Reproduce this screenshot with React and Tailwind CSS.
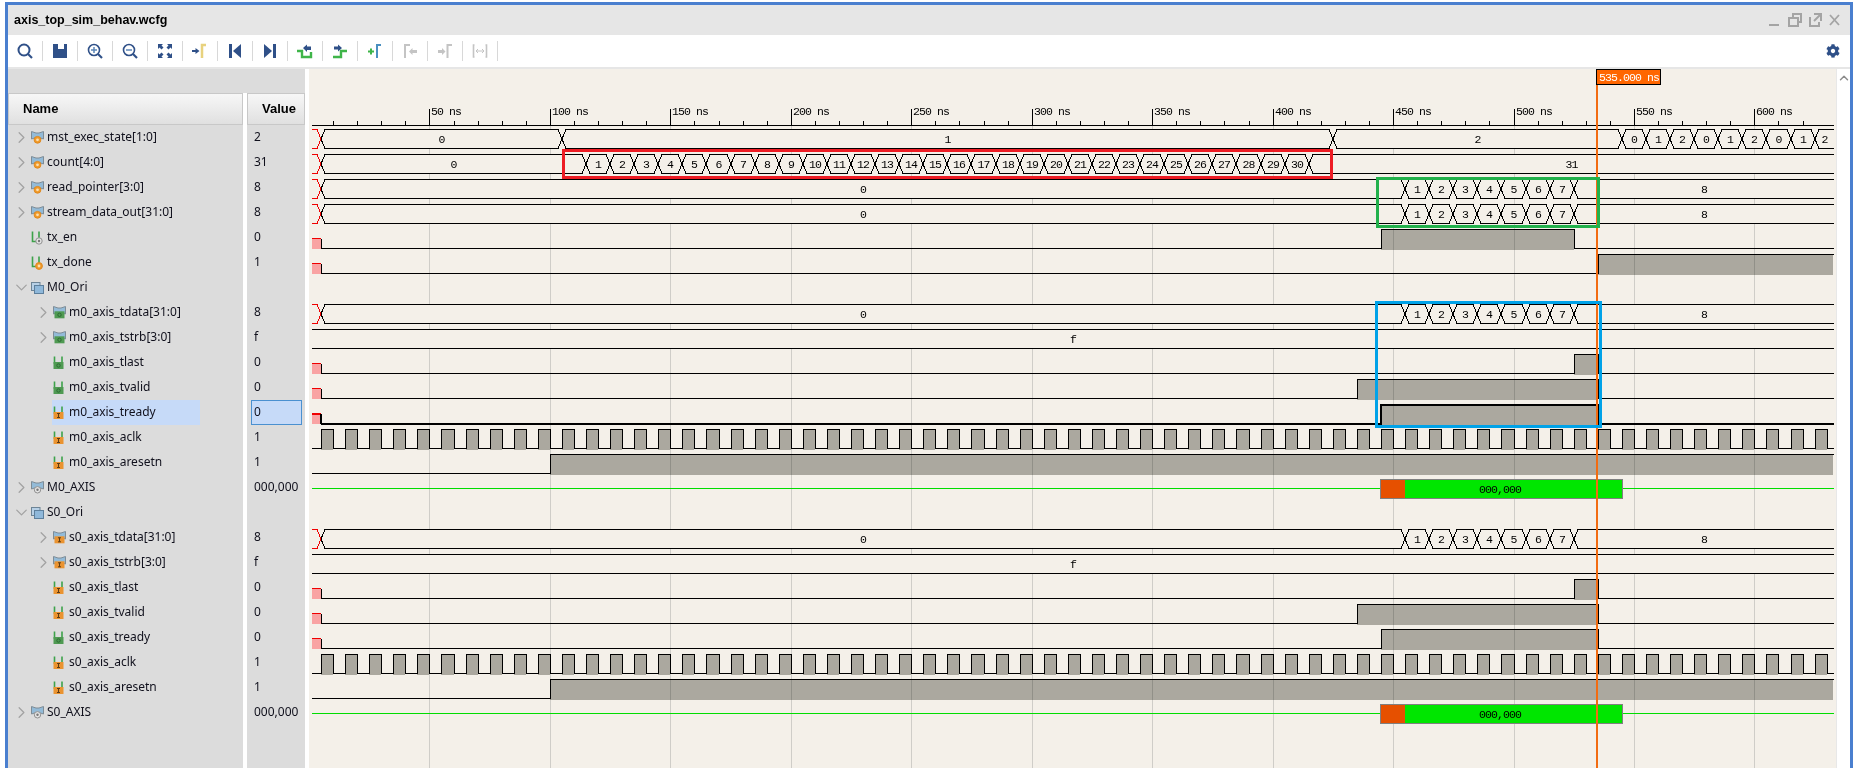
import { ChevronRight, ChevronDown, ChevronUp } from "lucide-react";
import { FaCog } from "react-icons/fa";

const X = (t) => Math.round(309 + t * 2.409);
const END = 1834;
const NAVY = "#2f5088";
const GREEN = "#3fb549";
const FADED = "#c4c4c4";

const range = (from, to) => Array.from({ length: to - from + 1 }, (_, i) => from + i);
const steps = (start, n) => range(0, n - 1).map((i) => start + i * 10);

const dataWave = { type: "bus", at: [5, ...steps(455, 8)], labels: ["0", "1", "2", "3", "4", "5", "6", "7", "8"] };
const strbWave = { type: "flat", label: "f" };

const rows = [
	{ name: "mst_exec_state[1:0]", value: "2", level: 0, icon: "bus", mark: "orange", open: "right",
		wave: { type: "bus", at: [5, 105, 425, ...steps(545, 9)], labels: ["0", "1", "2", "0", "1", "2", "0", "1", "2", "0", "1", "2"] } },
	{ name: "count[4:0]", value: "31", level: 0, icon: "bus", mark: "orange", open: "right",
		wave: { type: "bus", at: [5, ...steps(115, 31)], labels: range(0, 31).map(String) } },
	{ name: "read_pointer[3:0]", value: "8", level: 0, icon: "bus", mark: "orange", open: "right", wave: dataWave },
	{ name: "stream_data_out[31:0]", value: "8", level: 0, icon: "bus", mark: "orange", open: "right", wave: dataWave },
	{ name: "tx_en", value: "0", level: 0, icon: "wire", mark: "grey", wave: { type: "bit", red: true, spans: [[445, 525]] } },
	{ name: "tx_done", value: "1", level: 0, icon: "wire", mark: "orange", wave: { type: "bit", red: true, spans: [[535, null]] } },
	{ name: "M0_Ori", value: "", level: 0, icon: "group", open: "down" },
	{ name: "m0_axis_tdata[31:0]", value: "8", level: 1, icon: "bus", mark: "green", open: "right", wave: dataWave },
	{ name: "m0_axis_tstrb[3:0]", value: "f", level: 1, icon: "bus", mark: "green", open: "right", wave: strbWave },
	{ name: "m0_axis_tlast", value: "0", level: 1, icon: "wire", mark: "green", wave: { type: "bit", red: true, spans: [[525, 535]] } },
	{ name: "m0_axis_tvalid", value: "0", level: 1, icon: "wire", mark: "green", wave: { type: "bit", red: true, spans: [[435, 535]] } },
	{ name: "m0_axis_tready", value: "0", level: 1, icon: "wire", mark: "amber", selected: true, wave: { type: "bit", red: true, thick: true, spans: [[445, 535]] } },
	{ name: "m0_axis_aclk", value: "1", level: 1, icon: "wire", mark: "amber", wave: { type: "clock" } },
	{ name: "m0_axis_aresetn", value: "1", level: 1, icon: "wire", mark: "amber", wave: { type: "bit", spans: [[100, null]] } },
	{ name: "M0_AXIS", value: "000,000", level: 0, icon: "bus", mark: "grey", open: "right", wave: { type: "axis" } },
	{ name: "S0_Ori", value: "", level: 0, icon: "group", open: "down" },
	{ name: "s0_axis_tdata[31:0]", value: "8", level: 1, icon: "bus", mark: "amber", open: "right", wave: dataWave },
	{ name: "s0_axis_tstrb[3:0]", value: "f", level: 1, icon: "bus", mark: "amber", open: "right", wave: strbWave },
	{ name: "s0_axis_tlast", value: "0", level: 1, icon: "wire", mark: "amber", wave: { type: "bit", red: true, spans: [[525, 535]] } },
	{ name: "s0_axis_tvalid", value: "0", level: 1, icon: "wire", mark: "amber", wave: { type: "bit", red: true, spans: [[435, 535]] } },
	{ name: "s0_axis_tready", value: "0", level: 1, icon: "wire", mark: "green", wave: { type: "bit", red: true, spans: [[445, 535]] } },
	{ name: "s0_axis_aclk", value: "1", level: 1, icon: "wire", mark: "amber", wave: { type: "clock" } },
	{ name: "s0_axis_aresetn", value: "1", level: 1, icon: "wire", mark: "amber", wave: { type: "bit", spans: [[100, null]] } },
	{ name: "S0_AXIS", value: "000,000", level: 0, icon: "bus", mark: "grey", open: "right", wave: { type: "axis" } },
];

function Mark({ mark, cx, cy }) {
	if (mark === "orange") {
		return (
			<g>
				<circle cx={cx} cy={cy} r="3.4" fill="#f09a2a" stroke="#e08a20" />
				<circle cx={cx} cy={cy} r="1.4" fill="#fbe0b0" />
			</g>
		);
	}
	if (mark === "grey") {
		return (
			<g>
				<circle cx={cx} cy={cy} r="3.2" fill="#e4e4e4" stroke="#909090" />
				<circle cx={cx} cy={cy} r="1.2" fill="#777" />
			</g>
		);
	}
	const fill = mark === "green" ? "#4f9a52" : "#ea9330";
	const dot = mark === "green" ? "#2d6a32" : "#5d3a12";
	return (
		<g>
			<rect x={cx - 5} y={cy - 3.5} width="10" height="7" fill={fill} />
			{mark === "green" ? (
				<circle cx={cx} cy={cy} r="1.7" fill="none" stroke={dot} />
			) : (
				<path d={`M${cx - 1.5} ${cy - 2}h3M${cx} ${cy - 2}v4M${cx - 1.5} ${cy + 2}h3`} stroke={dot} fill="none" />
			)}
		</g>
	);
}

function SignalIcon({ icon, mark }) {
	const block = mark === "amber" || mark === "green";
	return (
		<svg width="14" height="14" viewBox="0 0 14 14" className="shrink-0">
			{icon === "bus" && (
				<g>
					<path d="M0.5 0.5 L5 2 H8 L12.5 0.5 V8 L8 6.5 H5 L0.5 8 Z" fill="#93bbd8" stroke="#7e8c96" />
					<Mark mark={mark} cx={6.5} cy={8.8} />
				</g>
			)}
			{icon === "wire" && (
				<g>
					{block ? (
						<path d="M1.5 0.5 V8 M9 0.5 V8 M1.5 2 V8" fill="none" stroke="#3da24a" strokeWidth="1.6" />
					) : (
						<path d="M1.5 0.5 V10.5 H5.5 M8 0.5 V7" fill="none" stroke="#3da24a" strokeWidth="1.6" />
					)}
					<Mark mark={mark} cx={block ? 5.5 : 8} cy={block ? 9.5 : 10} />
				</g>
			)}
			{icon === "group" && (
				<g>
					<rect x="0.5" y="1.5" width="8.5" height="8" fill="#b7d0e6" stroke="#6d8496" />
					<rect x="3.5" y="4.5" width="9" height="8" fill="#8fb8da" stroke="#5d7f9c" />
				</g>
			)}
		</svg>
	);
}

function Row({ row }) {
	const Chevron = row.open === "down" ? ChevronDown : ChevronRight;
	return (
		<div className={`flex h-[25px] items-center ${row.level === 1 ? "pl-[29px]" : "pl-[7px]"}`}>
			<div className="flex w-[12px] shrink-0 justify-center overflow-visible">
				{row.open && <Chevron size={19} strokeWidth={1.6} className="shrink-0 text-[#a2a2a2]" />}
			</div>
			<div className={`ml-[3px] flex h-full w-[148px] items-center pl-[1px] ${row.selected ? "bg-[#c6daf8]" : ""}`}>
				<SignalIcon icon={row.icon} mark={row.mark} />
				<span className="mb-[1px] ml-[2px] whitespace-nowrap">{row.name}</span>
			</div>
		</div>
	);
}

function ValueCell({ row }) {
	return (
		<div className="flex h-[25px] justify-center pl-[4px] pr-[3px]">
			<div className={`flex h-full w-full items-center border pb-[1px] pl-[2px] ${row.selected ? "border-[#4a90d0] bg-[#c6daf8]" : "border-transparent"}`}>
				{row.value}
			</div>
		</div>
	);
}

function BusWave({ i, at, labels }) {
	const top = 129.5 + 25 * i;
	const bot = top + 19;
	const mid = top + 9.5;
	const xs = at.map(X);
	let d = `M${xs[0]} ${mid}L${xs[0] + 4} ${top}M${xs[0]} ${mid}L${xs[0] + 4} ${bot}`;
	xs.forEach((x, k) => {
		const next = k + 1 < xs.length ? xs[k + 1] - 4 : END;
		d += `M${x + 4} ${top}H${next}M${x + 4} ${bot}H${next}`;
		if (k + 1 < xs.length) {
			const c = xs[k + 1];
			d += `M${c - 4} ${top}L${c + 4} ${bot}M${c - 4} ${bot}L${c + 4} ${top}`;
		}
	});
	return (
		<g>
			<rect x="312" y={top} width={END - 312} height="19" fill="#f4f0e9" />
			<path d={`M312 ${top}H317L321 ${mid}L317 ${bot}H312`} fill="none" stroke="#f00000" />
			<path d={d} fill="none" stroke="#000" />
			{labels.map((label, k) => (
				<text key={k} x={(xs[k] + (xs[k + 1] ?? END)) / 2} y={top + 13} textAnchor="middle">
					{label}
				</text>
			))}
		</g>
	);
}

function FlatWave({ i, label }) {
	const top = 129.5 + 25 * i;
	return (
		<g>
			<rect x="312" y={top} width={END - 312} height="19" fill="#f4f0e9" />
			<path d={`M312 ${top}H${END}M312 ${top + 19}H${END}`} stroke="#000" />
			<text x="1073" y={top + 13} textAnchor="middle">
				{label}
			</text>
		</g>
	);
}

function BitWave({ i, spans, red, thick }) {
	const high = 129.5 + 25 * i;
	const low = high + 19;
	const mid = high + 9;
	const start = red ? X(5) : 312;
	let d = `M${start} ${low}`;
	spans.forEach(([from, to]) => {
		d += `H${X(from)}V${high}H${to === null ? END : X(to)}`;
		if (to !== null) d += `V${low}`;
	});
	if (spans[spans.length - 1][1] !== null) d += `H${END}`;
	return (
		<g>
			{spans.map(([from, to], k) => (
				<rect
					key={k}
					x={X(from)}
					y={high}
					width={(to === null ? END - 1 : X(to)) - X(from)}
					height="20"
					fill="#b3b3ae"
					className="mix-blend-multiply"
				/>
			))}
			{red && (
				<g>
					<rect x="312" y={mid} width="9" height="10" fill="#f9a3a3" />
					<path d={`M312 ${mid}H${start}`} stroke="#f00000" strokeWidth={thick ? 2 : 1} />
					<path d={`M${start} ${mid}V${low}`} stroke="#000" strokeWidth={thick ? 2 : 1} />
				</g>
			)}
			<path d={d} fill="none" stroke="#000" strokeWidth={thick ? 2 : 1} />
		</g>
	);
}

function AxisWave({ i }) {
	const top = 129.5 + 25 * i;
	const mid = top + 9;
	return (
		<g>
			<path d={`M312 ${mid}H1380M1622 ${mid}H${END}`} stroke="#00dd00" />
			<rect x="1380" y={top} width="242" height="19" fill="#00e600" stroke="#808080" />
			<rect x="1381" y={top + 0.5} width="24" height="18" fill="#e65000" />
			<text x="1500" y={top + 13} textAnchor="middle">
				000,000
			</text>
		</g>
	);
}

function Wave({ wave, i }) {
	if (wave.type === "bus") return <BusWave i={i} at={wave.at} labels={wave.labels} />;
	if (wave.type === "flat") return <FlatWave i={i} label={wave.label} />;
	if (wave.type === "axis") return <AxisWave i={i} />;
	if (wave.type === "clock") {
		const spans = range(0, 62).map((n) => [5 + n * 10, 10 + n * 10]);
		return <BitWave i={i} spans={spans} />;
	}
	return <BitWave i={i} spans={wave.spans} red={wave.red} thick={wave.thick} />;
}

function WaveView() {
	const majors = range(1, 12).map((n) => n * 50);
	const minors = range(1, 62).map((n) => n * 10);
	return (
		<svg width="1527" height="699" viewBox="309 69 1527 699" className="block font-['Liberation_Mono',monospace] text-[11.5px] tracking-[-0.9px]" shapeRendering="crispEdges">
			{majors.map((t) => (
				<path key={t} d={`M${X(t) + 0.5} 125V768`} stroke="#cfcdc8" />
			))}
			{rows.map((row, i) => row.wave && <Wave key={row.name} wave={row.wave} i={i} />)}

			<path d={`M312 125.5H${END}`} stroke="#000" />
			{minors.map((t) => (
				<path key={t} d={`M${X(t) + 0.5} 121V125`} stroke="#000" />
			))}
			{majors.map((t) => (
				<g key={t}>
					<path d={`M${X(t) + 0.5} 109V125`} stroke="#000" />
					<text x={X(t) + 2} y="115">
						{t} ns
					</text>
				</g>
			))}

			<rect x="1596" y="84" width="2" height="684" fill="#f26c12" />
			<rect x="1596.5" y="69.5" width="64" height="15" fill="#ff6600" stroke="#000" />
			<text x="1599" y="81" fill="#fff">
				535.000 ns
			</text>

			<rect x="563.3" y="150.5" width="768" height="27" fill="none" stroke="#ed1c24" strokeWidth="3" />
			<rect x="1377.5" y="178.7" width="221" height="48" fill="none" stroke="#22b14c" strokeWidth="3" />
			<rect x="1376.5" y="302.5" width="224" height="124" fill="none" stroke="#00a2e8" strokeWidth="3" />
		</svg>
	);
}

function ToolIcon({ n }) {
	const lens = (
		<g fill="none" stroke={NAVY}>
			<circle cx="7" cy="7" r="5.5" strokeWidth="1.6" />
			<path d="M11 11L15 15" strokeWidth="2.2" />
		</g>
	);
	const icons = [
		<g fill="none" stroke={NAVY}>
			<circle cx="7" cy="7" r="5.5" strokeWidth="2" />
			<path d="M11 11L15 15" strokeWidth="2.2" />
		</g>,
		<path d="M1 1H6V6H12V1H15V15H1Z" fill={NAVY} />,
		<g>
			{lens}
			<path d="M4 7H10M7 4V10" stroke="#5c86b8" strokeWidth="1.5" />
		</g>,
		<g>
			{lens}
			<path d="M4 7H10" stroke="#5c86b8" strokeWidth="1.5" />
		</g>,
		<g fill={NAVY}>
			<path d="M1 1H6L4.5 2.5L6.5 4.5L4.5 6.5L2.5 4.5L1 6Z" />
			<path d="M15 1H10L11.5 2.5L9.5 4.5L11.5 6.5L13.5 4.5L15 6Z" />
			<path d="M1 15H6L4.5 13.5L6.5 11.5L4.5 9.5L2.5 11.5L1 10Z" />
			<path d="M15 15H10L11.5 13.5L9.5 11.5L11.5 9.5L13.5 11.5L15 10Z" />
		</g>,
		<g>
			<path d="M0 7H3.5V5L7.5 8L3.5 11V9H0Z" fill={NAVY} />
			<path d="M10 15V2H14" fill="none" stroke="#e8d27e" strokeWidth="2.5" />
		</g>,
		<g fill={NAVY}>
			<rect x="2" y="1" width="3" height="14" />
			<path d="M14 1V15L6 8Z" />
		</g>,
		<g fill={NAVY}>
			<rect x="11" y="1" width="3" height="14" />
			<path d="M2 1V15L10 8Z" />
		</g>,
		<g>
			<path d="M0 8H5V14H14V9" fill="none" stroke={GREEN} strokeWidth="2.4" />
			<path d="M6 5L10 1.5V3.5H14V7H10V9Z" fill={NAVY} />
		</g>,
		<g>
			<path d="M1 14H9V8H15" fill="none" stroke={GREEN} strokeWidth="2.4" />
			<path d="M2 3.5H6V1.5L10 5L6 8.5V6.5H2Z" fill={NAVY} />
		</g>,
		<g>
			<path d="M1 8.5H7M4 5.5V11.5" stroke={GREEN} strokeWidth="2" />
			<path d="M10 15V2H14" fill="none" stroke="#4a8fc0" strokeWidth="2" />
		</g>,
		<g>
			<path d="M3 15V2H8" fill="none" stroke={FADED} strokeWidth="2" />
			<path d="M15 7H10.5V5L7 8.5L10.5 12V10H15Z" fill={FADED} />
		</g>,
		<g>
			<path d="M1 7H5V5L8.5 8.5L5 12V10H1Z" fill={FADED} />
			<path d="M10.5 15V2H15" fill="none" stroke={FADED} strokeWidth="2" />
		</g>,
		<g fill="none" stroke={FADED}>
			<path d="M2.5 2H1.5V14H2.5M13.5 2H14.5V14H13.5" strokeWidth="1.6" />
			<path d="M4 8H12M6 6L4 8L6 10M10 6L12 8L10 10" />
		</g>,
	];
	return (
		<svg width="16" height="16" viewBox="0 0 16 16">
			{icons[n]}
		</svg>
	);
}

function WindowControls() {
	return (
		<svg width="72" height="14" viewBox="0 0 72 14" fill="none" stroke="#a4a4a4" strokeWidth="1.5" className="ml-auto mr-[10px]" shapeRendering="crispEdges">
			<path d="M1 12H11" strokeWidth="2" />
			<path d="M21 5H30V13H21ZM25 5V1H33V9H30" />
			<path d="M42 4V13H51V9M46 1H53V8" />
			<path d="M53 1L46 8" strokeWidth="2" shapeRendering="auto" />
			<path d="M62 2L71 12M71 2L62 12" strokeWidth="1.8" shapeRendering="auto" />
		</svg>
	);
}

export default function App() {
	return (
		<div className="h-[768px] w-[1858px] overflow-hidden bg-white pl-[5px] pr-[5px] pt-[2px] font-['Noto_Sans',sans-serif] text-[12px] text-[#10101c]">
			<div className="flex h-[766px] flex-col border-[3px] border-b-0 border-[#4a7fcf]">
				{/* Title bar */}
				<div className="flex h-[30px] shrink-0 items-center bg-[#e6e6e6] pl-[6px]">
					<span className="font-['Liberation_Sans',sans-serif] text-[12.5px] font-bold text-black">axis_top_sim_behav.wcfg</span>
					<WindowControls />
				</div>

				{/* Toolbar */}
				<div className="flex h-[32px] shrink-0 items-center bg-white">
					{range(0, 13).map((n) => (
						<div key={n} className="flex h-[20px] w-[35px] items-center justify-center border-r border-[#d8d8d8]">
							<ToolIcon n={n} />
						</div>
					))}
					<FaCog size={14} color={NAVY} className="ml-auto mr-[10px]" />
				</div>
				<div className="h-[2px] shrink-0 bg-[#e6e6e6]" />

				{/* Panes */}
				<div className="flex min-h-0 flex-1 bg-white">
					<div className="flex w-[297px] shrink-0 flex-col">
						<div className="h-[24px] shrink-0 bg-[#dcdcdc]" />
						<div className="flex flex-1 gap-[4px]">
							<div className="w-[235px] bg-[#dcdcdc]">
								<div className="flex h-[32px] items-center border border-[#c8c8c8] bg-gradient-to-b from-[#f7f7f7] to-[#e0e0e0] pl-[14px] font-['Liberation_Sans',sans-serif] text-[13px] font-bold text-black">
									Name
								</div>
								{rows.map((row) => (
									<Row key={row.name} row={row} />
								))}
							</div>
							<div className="w-[58px] bg-[#dcdcdc]">
								<div className="flex h-[32px] items-center border border-[#c8c8c8] bg-gradient-to-b from-[#f7f7f7] to-[#e0e0e0] pl-[14px] font-['Liberation_Sans',sans-serif] text-[13px] font-bold text-black">
									Value
								</div>
								{rows.map((row) => (
									<ValueCell key={row.name} row={row} />
								))}
							</div>
						</div>
					</div>
					<div className="ml-[4px] h-full w-[1527px] shrink-0 bg-[#f4f0e9]">
						<WaveView />
					</div>
					<div className="flex flex-1 justify-center border-l border-[#e8e8e8] pt-[2px]">
						<ChevronUp size={14} strokeWidth={2.5} className="text-[#8c8c8c]" />
					</div>
				</div>
			</div>
		</div>
	);
}
